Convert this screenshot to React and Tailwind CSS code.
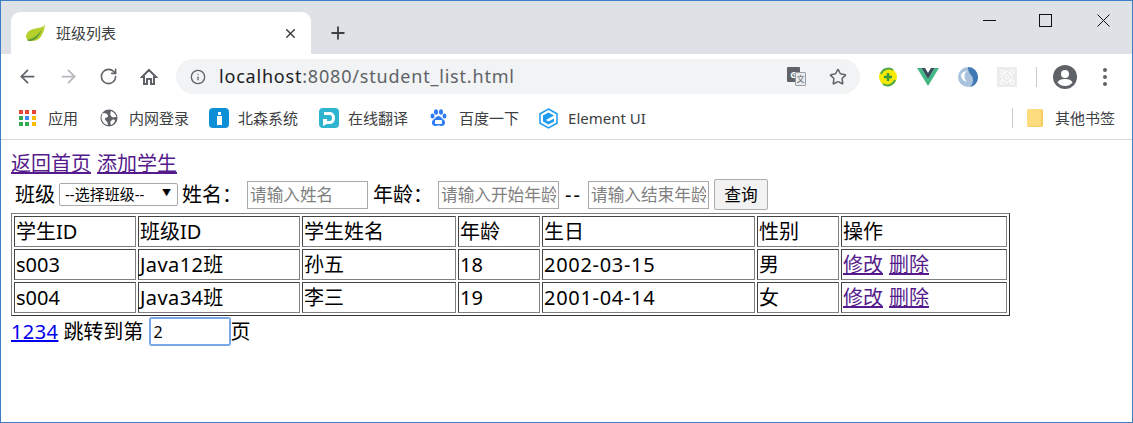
import React from 'react';
import { ArrowLeft, ArrowRight, RotateCw, Info, Star, X, Plus } from 'lucide-react';

const Leaf = () => (
  <svg width="22" height="20" viewBox="0 0 22 20">
    <path d="M20 1C19 4 17 4 13 5C6 6 2 8 1 13C1 16 3 18 6 18C13 19 19 13 20 1Z" fill="#b5cf2e" />
    <path d="M2 17C7 16 13 13 17 6C15 13 10 18 5 18C4 18 3 18 2 17Z" fill="#5f9e34" />
  </svg>
);

const HomeIcon = () => (
  <svg width="18" height="18" viewBox="0 0 18 18" className="ml-[22px]">
    <path d="M9 2L16 9H14V16H11V11H7V16H4V9H2Z" fill="none" stroke="#5f6368" strokeWidth="2" strokeLinejoin="miter" />
  </svg>
);

const AppsIcon = () => {
  const colors = ['#ea4335', '#ea4335', '#ea4335', '#34a853', '#4285f4', '#fbbc05', '#34a853', '#34a853', '#fbbc05'];
  return (
    <div className="grid grid-cols-3 gap-[2px] w-[17px] h-[17px]">
      {colors.map((c, i) => (
        <span key={i} className="w-[4px] h-[4px]" style={{ backgroundColor: c }} />
      ))}
    </div>
  );
};

const GlobeIcon = () => (
  <svg width="18" height="18" viewBox="0 0 18 18">
    <circle cx="9" cy="9" r="8.5" fill="#5f6368" />
    <path d="M3 4C6 4 8 5 8 7C8 9 5 8 5 10C5 12 8 12 8 16C5 16 2 13 1.5 9C1.5 7 2 5 3 4ZM11 2C14 3 16 6 16.5 8C14 8 13 9 12 8C10 7 10 4 11 2ZM12 11C14 10 15 11 15 12C14 14 13 15 11 16C10 14 10 12 12 11Z" fill="#fff" />
  </svg>
);

const BeisenIcon = () => (
  <div className="w-5 h-5 rounded-sm bg-[#0d8fd8] flex flex-col items-center justify-center gap-[1px]">
    <span className="w-[3px] h-[3px] bg-white" />
    <span className="w-[5px] h-[9px] bg-white" />
  </div>
);

const TranslateIcon = () => (
  <svg width="20" height="20" viewBox="0 0 20 20">
    <rect width="20" height="20" rx="4" fill="#2fb4cf" />
    <path d="M5 4H11C14 4 16 7 16 10C16 13 14 16 11 16H8L4 18V11H8V13H11C12 13 13 12 13 10C13 8 12 7 11 7H5Z" fill="#fff" />
  </svg>
);

const BaiduIcon = () => (
  <svg width="17" height="18" viewBox="0 0 17 18">
    <g fill="#2f7df6">
      <ellipse cx="2.5" cy="7" rx="2" ry="2.6" />
      <ellipse cx="6" cy="3" rx="2" ry="2.8" />
      <ellipse cx="11" cy="3" rx="2" ry="2.8" />
      <ellipse cx="14.5" cy="7" rx="2" ry="2.6" />
      <path d="M8.5 7C11 7 12 10 14 11C16 13 15 17 12 17C10.500 17 9.500 16.500 8.500 16.500C7.500 16.500 6.500 17 5 17C2 17 1 13 3 11C5 10 6 7 8.500 7Z" />
    </g>
    <rect x="5" y="11" width="7" height="4" rx="1" fill="#fff" />
  </svg>
);

const ElementIcon = () => (
  <svg width="19" height="21" viewBox="0 0 19 21">
    <path d="M9.500 1L18 5.800V15.200L9.500 20L1 15.200V5.800Z" fill="#fff" stroke="#1e9bf0" strokeWidth="1.500" />
    <path d="M9.500 4.500L15 7.500L9.500 10.500L7 12L9.500 13.500L15 10.500V13.500L9.500 16.500L4 13.500V7.500Z" fill="#1e9bf0" />
  </svg>
);

const Bookmark = ({ icon, label, className = '' }) => (
  <div className={`flex items-center text-[15px] text-[#3c4043] ${className}`}>
    <span className="w-[29px] flex items-center">{icon}</span>
    <span>{label}</span>
  </div>
);

const Extensions = () => (
  <div className="flex items-center">
    <svg width="20" height="20" viewBox="0 0 20 20" className="ml-[18px]">
      <circle cx="10" cy="10" r="9" fill="#f5e900" />
      <path d="M3 7A8 8 0 0 1 15 3M17 13A8 8 0 0 1 5 17" fill="none" stroke="#4fa84a" strokeWidth="2" />
      <path d="M10 6V14M6 10H14" stroke="#3a9a3c" strokeWidth="2.500" />
    </svg>
    <svg width="22" height="18" viewBox="0 0 22 18" className="ml-[19px]">
      <path d="M0 0H4.500L11 11L17.500 0H22L11 18Z" fill="#41b883" />
      <path d="M4.500 0H8L11 5L14 0H17.500L11 11Z" fill="#35495e" />
    </svg>
    <svg width="22" height="22" viewBox="0 0 22 22" className="ml-[18px]">
      <circle cx="11" cy="11" r="10" fill="#a9c3df" />
      <path d="M11 1A10 10 0 0 1 21 11C21 16 18 20 13 21C17 17 17 12 14 9C12 7 11 4 11 1Z" fill="#3f78b5" />
      <path d="M11 5C7 6 6 12 10 16C6 15 4 12 4 9C5 6 8 5 11 5Z" fill="#fff" />
    </svg>
    <svg width="20" height="20" viewBox="0 0 20 20" className="ml-[18px]">
      <rect width="20" height="20" fill="#ececec" />
      <path d="M10 4L16 10L10 16L4 10Z" fill="none" stroke="#fff" />
      <circle cx="5" cy="5" r="2" fill="none" stroke="#fff" />
      <circle cx="15" cy="5" r="2" fill="none" stroke="#fff" />
      <circle cx="5" cy="15" r="2" fill="none" stroke="#fff" />
      <circle cx="15" cy="15" r="2" fill="none" stroke="#fff" />
      <circle cx="10" cy="10" r="2" fill="none" stroke="#fff" />
    </svg>
  </div>
);

const cellBorder = 'border border-t-[#444] border-l-[#444] border-r-[#808080] border-b-[#808080] px-[1px] text-left font-normal h-[31px] leading-none';

const A = ({ children, className = 'text-[#551a8b]' }) => (
  <a href="#" className={`underline ${className}`}>{children}</a>
);

const inputClass = 'w-[121px] h-[28px] border border-[#a9a9a9] px-[2px] text-[16.67px] placeholder:text-[#808080]';

// latin text in the class and birthday columns runs a bit wider in the reference
const cellTracking = ['', 'tracking-[0.4px]', '', '', 'tracking-[0.7px]', ''];

const rows = [
  ['s003', 'Java12班', '孙五', '18', '2002-03-15', '男'],
  ['s004', 'Java34班', '李三', '19', '2001-04-14', '女'],
];

const App = () => {
  return (
    <div className="w-[1133px] h-[423px] overflow-hidden bg-white border border-[#3b80c4] flex flex-col font-['Noto_Sans','Noto_Sans_CJK_SC',sans-serif]">
      {/* tab strip */}
      <div className="h-[53px] bg-[#dee1e6] flex items-end shrink-0">
        <div className="ml-[10px] w-[300px] h-[42px] bg-white rounded-t-[9px] flex items-center pl-[14px] pr-[13px]">
          <Leaf />
          <span className="ml-[9px] text-[15px] text-[#3c4043] flex-1">班级列表</span>
          <X size={15} strokeWidth={2.4} color="#3c4043" />
        </div>
        <div className="ml-[17px] mb-[11px]">
          <Plus size={20} strokeWidth={2.2} color="#3c4043" />
        </div>
        <div className="ml-auto self-start flex items-center h-[38px] pr-[22px]">
          <svg width="13" height="13" viewBox="0 0 13 13" className="mr-[43px]"><path d="M0 6.500H13" stroke="#111" /></svg>
          <svg width="13" height="13" viewBox="0 0 13 13" className="mr-[45px]"><rect x="0.500" y="0.500" width="12" height="12" fill="none" stroke="#111" /></svg>
          <svg width="13" height="13" viewBox="0 0 13 13"><path d="M0.500 0.500L12.500 12.500M12.500 0.500L0.500 12.500" stroke="#111" /></svg>
        </div>
      </div>

      {/* toolbar */}
      <div className="h-[46px] flex items-center shrink-0 pl-[16px] pr-[18px] pb-[1px]">
        <ArrowLeft size={21} color="#5f6368" strokeWidth={2} />
        <ArrowRight size={21} color="#b4b7bb" strokeWidth={2} className="ml-[20px]" />
        <RotateCw size={19} color="#5f6368" strokeWidth={2} className="ml-[20px]" />
        <HomeIcon />
        <div className="ml-[18px] w-[684px] h-[35px] bg-[#f1f3f4] rounded-full flex items-center pl-[14px] pr-[13px]">
          <Info size={16} color="#5f6368" strokeWidth={2} />
          <span className="ml-[13px] pb-[1px] text-[18px] tracking-[0.8px] text-[#5f6368] flex-1"><span className="text-[#202124]">localhost</span>:8080/student_list.html</span>
          <div className="relative w-[19px] h-[19px] mr-[23px]">
            <span className="absolute left-0 top-0 w-[13px] h-[15px] bg-[#5f6368] rounded-[1px] text-white text-[9px] leading-[15px] text-center font-bold">G</span>
            <span className="absolute right-0 bottom-0 w-[11px] h-[14px] bg-[#e8eaed] border border-[#9aa0a6] rounded-[1px] text-[#5f6368] text-[8px] leading-[12px] text-center">文</span>
          </div>
          <Star size={18} color="#5f6368" strokeWidth={2} />
        </div>
        <Extensions />
        <div className="ml-[19px] w-[1px] h-5 bg-[#ccc]" />
        <svg width="24" height="24" viewBox="0 0 24 24" className="ml-[16px]">
          <circle cx="12" cy="12" r="12" fill="#5f6368" />
          <circle cx="12" cy="9" r="4" fill="#fff" />
          <path d="M4.500 17.500C6 14.500 9 14 12 14C15 14 18 14.500 19.500 17.500C17.500 20 15 21 12 21C9 21 6.500 20 4.500 17.500Z" fill="#fff" />
        </svg>
        <div className="ml-[26px] flex flex-col gap-[3px]">
          <span className="w-[4px] h-[4px] rounded-full bg-[#5f6368]" />
          <span className="w-[4px] h-[4px] rounded-full bg-[#5f6368]" />
          <span className="w-[4px] h-[4px] rounded-full bg-[#5f6368]" />
        </div>
      </div>

      {/* bookmarks */}
      <div className="h-[40px] border-b border-[#d5d7da] flex items-center shrink-0 pl-[18px] pr-[17px] pb-[3px]">
        <Bookmark icon={<AppsIcon />} label="应用" />
        <Bookmark icon={<GlobeIcon />} label="内网登录" className="ml-[22px]" />
        <Bookmark icon={<BeisenIcon />} label="北森系统" className="ml-[20px]" />
        <Bookmark icon={<TranslateIcon />} label="在线翻译" className="ml-[21px]" />
        <Bookmark icon={<BaiduIcon />} label="百度一下" className="ml-[22px]" />
        <Bookmark icon={<ElementIcon />} label="Element UI" className="ml-[20px]" />
        <div className="ml-auto w-[1px] h-5 bg-[#ccc]" />
        <div className="ml-[14px] w-[16px] h-[18px] bg-[#fddc7f] rounded-[2px] border-r-2 border-b border-[#f6cc5a]" />
        <span className="ml-[12px] text-[15px] text-[#3c4043]">其他书签</span>
      </div>

      {/* page */}
      <div className="pl-[10px] text-[20px] text-black flex-1 flex flex-col items-start">
        <div className="mt-[12px] h-[24px] leading-[24px] flex gap-[6px]">
          <A>返回首页</A>
          <A>添加学生</A>
        </div>
        <div className="mt-[3px] h-[31px] pl-[4px] flex items-center">
          <span>班级</span>
          <div className="ml-[4px] w-[119px] h-[23px] border border-[#a9a9a9] rounded-[2px] flex items-center pl-[5px] text-[15px]">
            <span className="flex-1">--选择班级--</span>
            <span className="text-[9px] pr-[6px] pb-[3px]">▼</span>
          </div>
          <span className="ml-[4px]">姓名：</span>
          <input readOnly placeholder="请输入姓名" className={`ml-[5px] ${inputClass}`} />
          <span className="ml-[5px]">年龄：</span>
          <input readOnly placeholder="请输入开始年龄" className={`ml-[5px] ${inputClass}`} />
          <span className="w-[29px] text-center tracking-[2px]">--</span>
          <input readOnly placeholder="请输入结束年龄" className={inputClass} />
          <button className="ml-[5px] w-[54px] h-[31px] border border-[#adadad] rounded-[2px] bg-[#f2f2f2] text-[16.67px]">查询</button>
        </div>
        <table className="mt-[3px] w-[999px] table-fixed border border-t-[#808080] border-l-[#808080] border-r-[#333] border-b-[#333] border-separate border-spacing-[2px]">
          <colgroup>
            <col className="w-[122px]" />
            <col className="w-[162px]" />
            <col className="w-[154px]" />
            <col className="w-[82px]" />
            <col className="w-[213px]" />
            <col className="w-[82px]" />
            <col />
          </colgroup>
          <thead>
            <tr>
              {['学生ID', '班级ID', '学生姓名', '年龄', '生日', '性别', '操作'].map((h) => (
                <th key={h} className={cellBorder}>{h}</th>
              ))}
            </tr>
          </thead>
          <tbody>
            {rows.map((r) => (
              <tr key={r[0]}>
                {r.map((v, i) => (
                  <td key={i} className={`${cellBorder} ${cellTracking[i]}`}>{v}</td>
                ))}
                <td className={cellBorder}>
                  <div className="flex gap-[6px]">
                    <A>修改</A>
                    <A>删除</A>
                  </div>
                </td>
              </tr>
            ))}
          </tbody>
        </table>
        <div className="flex items-center h-[31px]">
          <A className="text-[#0000ee] tracking-[0.4px]">1234</A>
          <span className="ml-[5px]">跳转到第</span>
          <input readOnly value="2" className="ml-[7px] w-[80px] h-[27px] border border-[#7aa7e6] outline outline-1 outline-[#7aa7e6] rounded-[1px] px-[2px] text-[16px]" />
          <span>页</span>
        </div>
      </div>
    </div>
  );
};

export default App;
